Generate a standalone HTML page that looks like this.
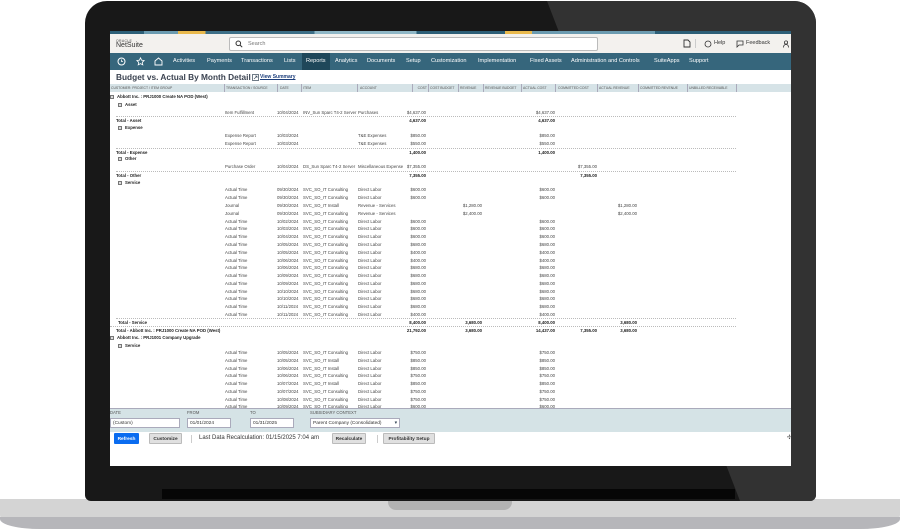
<!DOCTYPE html>
<html><head><meta charset="utf-8"><style>
*{margin:0;padding:0;box-sizing:border-box}
body{width:900px;height:529px;background:#fff;position:relative;overflow:hidden;font-family:"Liberation Sans",sans-serif}
.abs{position:absolute}
#body{left:85px;top:1px;width:731px;height:500px;background:#181818;border-radius:22px 22px 6px 6px;overflow:hidden}
#scr{left:110px;top:31px;width:681px;height:435px;background:#fff;overflow:hidden}
.r{position:absolute;left:0;width:681px;height:7px;font-size:4.3px;line-height:7px;color:#444;white-space:nowrap}
.r span{position:absolute;top:0}
.b{font-weight:bold;color:#222}
.t{left:115px}.d{left:167px}.i{left:193px}.a{left:248px}
.n1{left:280px;width:36px;text-align:right}
.n3{left:336px;width:36px;text-align:right}
.n5{left:409px;width:36px;text-align:right}
.n6{left:451px;width:36px;text-align:right}
.n7{left:491px;width:36px;text-align:right}
.tot{border-top:1px dotted #bbb}
.box{display:inline-block;width:4px;height:4px;border:0.6px solid #777;background:#ddd;vertical-align:middle;margin-right:3px}
.nav span{position:absolute;top:0;line-height:17px;font-size:5.6px;color:#fff;white-space:nowrap}
.hd span{position:absolute;top:0;font-size:3.4px;color:#555;line-height:8px;border-right:0.5px solid #aab;padding-right:1px;white-space:nowrap;overflow:hidden;height:8px}
.btn{position:absolute;top:402px;height:11px;font-size:4.8px;line-height:11px;text-align:center;background:#e0e0e0;border:0.5px solid #bbb;border-radius:1px;color:#333;font-weight:bold;white-space:nowrap}
.lab{position:absolute;top:379px;font-size:4.2px;color:#555}
.inp{position:absolute;top:387px;height:10px;background:#fff;border:0.5px solid #aab;font-size:4.8px;line-height:9px;padding-left:2px;color:#333;white-space:nowrap}
</style></head><body>
<div class="abs" style="left:0;top:499px;width:900px;height:30px;background:#d4d4d4;border-radius:0 0 40px 40px / 0 0 14px 14px"></div>
<div class="abs" style="left:0;top:517px;width:900px;height:12px;background:#b6b6ba;border-radius:0 0 40px 40px / 0 0 10px 10px"></div>
<div class="abs" style="left:388px;top:499px;width:124px;height:11px;background:#b2b2b2;border-radius:0 0 8px 8px"></div>
<div id="body" class="abs">
  <svg class="abs" style="left:0;top:0" width="731" height="500"><polygon points="462,0 731,0 731,500 655,500" fill="#323232"/></svg>
</div>
<div class="abs" style="left:162px;top:489px;width:573px;height:10px;background:#060606"></div>
<div id="scr" class="abs">
  <div class="abs" style="left:0;top:0;width:681px;height:3px;background:linear-gradient(90deg,#2d5f77 0 5%,#6b9bb0 5% 10%,#e9b94c 10% 14%,#3d6f87 14% 30%,#8fb7c6 30% 45%,#2d5f77 45% 58%,#e9b94c 58% 62%,#6b9bb0 62% 80%,#2d5f77 80%)"></div>
  <div class="abs" style="left:0;top:3px;width:681px;height:19px;background:#f3f1ee"></div>
  <div class="abs" style="left:6px;top:8px;font-size:3.5px;color:#444;letter-spacing:0.3px">ORACLE</div>
  <div class="abs" style="left:6px;top:11px;font-size:7px;color:#333">NetSuite</div>
  <div class="abs" style="left:119px;top:6px;width:369px;height:14px;background:#fff;border:0.7px solid #bbb;border-radius:2px;font-size:5.5px;line-height:13px;color:#777;padding-left:18px">Search</div>
  <svg class="abs" style="left:125px;top:9px" width="8" height="8"><circle cx="3.3" cy="3.3" r="2.3" stroke="#333" stroke-width="1" fill="none"/><line x1="5" y1="5" x2="7.2" y2="7.2" stroke="#333" stroke-width="1"/></svg>
  <svg class="abs" style="left:573px;top:8px" width="8" height="9"><path d="M1 1h4l2 2v5H1z" fill="none" stroke="#333" stroke-width="0.9"/></svg>
  <div class="abs" style="left:585px;top:8px;width:0.5px;height:9px;background:#ccc"></div>
  <svg class="abs" style="left:594px;top:9px" width="8" height="8"><circle cx="4" cy="4" r="3" fill="none" stroke="#333" stroke-width="0.8"/></svg>
  <div class="abs" style="left:604px;top:9px;font-size:5.5px;color:#333">Help</div>
  <svg class="abs" style="left:626px;top:9px" width="8" height="8"><path d="M1 1h6v4H3L1 7z" fill="none" stroke="#333" stroke-width="0.8"/></svg>
  <div class="abs" style="left:636px;top:9px;font-size:5.5px;color:#333">Feedback</div>
  <svg class="abs" style="left:673px;top:9px" width="8" height="8"><circle cx="3" cy="2.5" r="1.6" fill="none" stroke="#333" stroke-width="0.8"/><path d="M0.5 7.5c0-2 1-3 2.5-3s2.5 1 2.5 3" fill="none" stroke="#333" stroke-width="0.8"/></svg>
  <div class="abs nav" style="left:0;top:22px;width:681px;height:17px;background:#36667c">
    <div class="abs" style="left:192px;top:0;width:28px;height:17px;background:#1f475a"></div>
    <svg class="abs" style="left:7px;top:4px" width="9" height="9"><circle cx="4.5" cy="4.5" r="3.5" fill="none" stroke="#fff" stroke-width="1"/><path d="M4.5 2.5v2h1.5" stroke="#fff" stroke-width="0.8" fill="none"/></svg>
    <svg class="abs" style="left:26px;top:4px" width="9" height="9"><path d="M4.5 0.8l1.1 2.4 2.6.3-1.9 1.8.5 2.6-2.3-1.3-2.3 1.3.5-2.6L0.8 3.5l2.6-.3z" fill="none" stroke="#fff" stroke-width="0.8"/></svg>
    <svg class="abs" style="left:44px;top:4px" width="9" height="9"><path d="M1 8V4l3.5-3 3.5 3v4z" fill="none" stroke="#fff" stroke-width="0.9"/></svg>
    <span style="left:63px">Activities</span><span style="left:97px">Payments</span><span style="left:131px">Transactions</span><span style="left:174px">Lists</span><span style="left:196px">Reports</span><span style="left:225px">Analytics</span><span style="left:257px">Documents</span><span style="left:296px">Setup</span><span style="left:321px">Customization</span><span style="left:368px">Implementation</span><span style="left:420px">Fixed Assets</span><span style="left:461px">Administration and Controls</span><span style="left:544px">SuiteApps</span><span style="left:579px">Support</span>
  </div>
  <div class="abs" style="left:6px;top:41px;font-size:8.3px;font-weight:bold;color:#3a4250">Budget vs. Actual By Month Detail</div>
  <svg class="abs" style="left:142px;top:43px" width="7" height="7"><rect x="0.5" y="0.5" width="6" height="6" fill="none" stroke="#345" stroke-width="0.7"/><path d="M2 5l3-3M3 2h2v2" stroke="#345" stroke-width="0.6" fill="none"/></svg>
  <div class="abs" style="left:150px;top:43px;font-size:5px;font-weight:bold;color:#1b3d7a;text-decoration:underline">View Summary</div>
  <div class="abs hd" style="left:0;top:53px;width:681px;height:8px;background:#d6e3e7">
    <span style="left:1px;width:114px">CUSTOMER: PROJECT / ITEM GROUP</span><span style="left:116px;width:52px">TRANSACTION / SOURCE</span><span style="left:170px;width:22px">DATE</span><span style="left:193px;width:55px">ITEM</span><span style="left:250px;width:53px">ACCOUNT</span><span style="left:305px;width:14px;text-align:right">COST</span><span style="left:320px;width:29px">COST BUDGET</span><span style="left:350px;width:24px">REVENUE</span><span style="left:375px;width:37px">REVENUE BUDGET</span><span style="left:413px;width:33px">ACTUAL COST</span><span style="left:448px;width:40px">COMMITTED COST</span><span style="left:489px;width:40px">ACTUAL REVENUE</span><span style="left:530px;width:48px">COMMITTED REVENUE</span><span style="left:579px;width:48px">UNBILLED RECEIVABLE</span>
  </div>
  <div class="r" style="top:62px"><span class="b" style="left:0"><i class="box"></i>Abbott Inc. : PRJ1000 Create NA POD (West)</span></div>
  <div class="r" style="top:70px"><span class="b" style="left:8px"><i class="box"></i>Asset</span></div>
  <div class="r" style="top:78px"><span class="t">Item Fulfillment</span><span class="d">10/04/2024</span><span class="i">INV_Sun Sparc T4-2 Server</span><span class="a">Purchases</span><span class="n1">$4,637.00</span><span class="n5">$4,637.00</span></div>
  <div class="r tot" style="top:85px;left:6px;width:620px"><span class="b" style="left:0">Total - Asset</span><span class="n1 b" style="left:274px">4,637.00</span><span class="n5 b" style="left:403px">4,637.00</span></div>
  <div class="r" style="top:93px"><span class="b" style="left:8px"><i class="box"></i>Expense</span></div>
  <div class="r" style="top:101px"><span class="t">Expense Report</span><span class="d">10/03/2024</span><span class="a">T&amp;E Expenses</span><span class="n1">$850.00</span><span class="n5">$850.00</span></div>
  <div class="r" style="top:109px"><span class="t">Expense Report</span><span class="d">10/03/2024</span><span class="a">T&amp;E Expenses</span><span class="n1">$550.00</span><span class="n5">$550.00</span></div>
  <div class="r tot" style="top:117px;left:6px;width:620px"><span class="b" style="left:0">Total - Expense</span><span class="n1 b" style="left:274px">1,400.00</span><span class="n5 b" style="left:403px">1,400.00</span></div>
  <div class="r" style="top:124px"><span class="b" style="left:8px"><i class="box"></i>Other</span></div>
  <div class="r" style="top:132px"><span class="t">Purchase Order</span><span class="d">10/04/2024</span><span class="i">DS_Sun Sparc T4-2 Server</span><span class="a">Miscellaneous Expense</span><span class="n1">$7,355.00</span><span class="n6">$7,355.00</span></div>
  <div class="r tot" style="top:140px;left:6px;width:620px"><span class="b" style="left:0">Total - Other</span><span class="n1 b" style="left:274px">7,355.00</span><span class="n6 b" style="left:445px">7,355.00</span></div>
  <div class="r" style="top:148px"><span class="b" style="left:8px"><i class="box"></i>Service</span></div>
  <div class="r" style="top:155px"><span class="t">Actual Time</span><span class="d">09/30/2024</span><span class="i">SVC_SO_IT Consulting</span><span class="a">Direct Labor</span><span class="n1">$600.00</span><span class="n5">$600.00</span></div>
  <div class="r" style="top:163px"><span class="t">Actual Time</span><span class="d">09/30/2024</span><span class="i">SVC_SO_IT Consulting</span><span class="a">Direct Labor</span><span class="n1">$600.00</span><span class="n5">$600.00</span></div>
  <div class="r" style="top:171px"><span class="t">Journal</span><span class="d">09/30/2024</span><span class="i">SVC_SO_IT Install</span><span class="a">Revenue - Services</span><span class="n3">$1,280.00</span><span class="n7">$1,280.00</span></div>
  <div class="r" style="top:179px"><span class="t">Journal</span><span class="d">09/30/2024</span><span class="i">SVC_SO_IT Consulting</span><span class="a">Revenue - Services</span><span class="n3">$2,400.00</span><span class="n7">$2,400.00</span></div>
  <div class="r" style="top:187px"><span class="t">Actual Time</span><span class="d">10/02/2024</span><span class="i">SVC_SO_IT Consulting</span><span class="a">Direct Labor</span><span class="n1">$600.00</span><span class="n5">$600.00</span></div>
  <div class="r" style="top:194px"><span class="t">Actual Time</span><span class="d">10/03/2024</span><span class="i">SVC_SO_IT Consulting</span><span class="a">Direct Labor</span><span class="n1">$600.00</span><span class="n5">$600.00</span></div>
  <div class="r" style="top:202px"><span class="t">Actual Time</span><span class="d">10/04/2024</span><span class="i">SVC_SO_IT Consulting</span><span class="a">Direct Labor</span><span class="n1">$600.00</span><span class="n5">$600.00</span></div>
  <div class="r" style="top:210px"><span class="t">Actual Time</span><span class="d">10/05/2024</span><span class="i">SVC_SO_IT Consulting</span><span class="a">Direct Labor</span><span class="n1">$680.00</span><span class="n5">$680.00</span></div>
  <div class="r" style="top:218px"><span class="t">Actual Time</span><span class="d">10/05/2024</span><span class="i">SVC_SO_IT Consulting</span><span class="a">Direct Labor</span><span class="n1">$400.00</span><span class="n5">$400.00</span></div>
  <div class="r" style="top:226px"><span class="t">Actual Time</span><span class="d">10/06/2024</span><span class="i">SVC_SO_IT Consulting</span><span class="a">Direct Labor</span><span class="n1">$400.00</span><span class="n5">$400.00</span></div>
  <div class="r" style="top:233px"><span class="t">Actual Time</span><span class="d">10/06/2024</span><span class="i">SVC_SO_IT Consulting</span><span class="a">Direct Labor</span><span class="n1">$680.00</span><span class="n5">$680.00</span></div>
  <div class="r" style="top:241px"><span class="t">Actual Time</span><span class="d">10/09/2024</span><span class="i">SVC_SO_IT Consulting</span><span class="a">Direct Labor</span><span class="n1">$680.00</span><span class="n5">$680.00</span></div>
  <div class="r" style="top:249px"><span class="t">Actual Time</span><span class="d">10/09/2024</span><span class="i">SVC_SO_IT Consulting</span><span class="a">Direct Labor</span><span class="n1">$680.00</span><span class="n5">$680.00</span></div>
  <div class="r" style="top:257px"><span class="t">Actual Time</span><span class="d">10/10/2024</span><span class="i">SVC_SO_IT Consulting</span><span class="a">Direct Labor</span><span class="n1">$680.00</span><span class="n5">$680.00</span></div>
  <div class="r" style="top:264px"><span class="t">Actual Time</span><span class="d">10/10/2024</span><span class="i">SVC_SO_IT Consulting</span><span class="a">Direct Labor</span><span class="n1">$680.00</span><span class="n5">$680.00</span></div>
  <div class="r" style="top:272px"><span class="t">Actual Time</span><span class="d">10/11/2024</span><span class="i">SVC_SO_IT Consulting</span><span class="a">Direct Labor</span><span class="n1">$680.00</span><span class="n5">$680.00</span></div>
  <div class="r" style="top:280px"><span class="t">Actual Time</span><span class="d">10/11/2024</span><span class="i">SVC_SO_IT Consulting</span><span class="a">Direct Labor</span><span class="n1">$400.00</span><span class="n5">$400.00</span></div>
  <div class="r tot" style="top:287px;left:6px;width:620px"><span class="b" style="left:2px">Total - Service</span><span class="n1 b" style="left:274px">8,400.00</span><span class="n3 b" style="left:330px">3,680.00</span><span class="n5 b" style="left:403px">8,400.00</span><span class="n7 b" style="left:485px">3,680.00</span></div>
  <div class="r tot" style="top:295px;width:626px"><span class="b" style="left:6px">Total - Abbott Inc. : PRJ1000 Create NA POD (West)</span><span class="n1 b">21,792.00</span><span class="n3 b">3,680.00</span><span class="n5 b">14,437.00</span><span class="n6 b">7,355.00</span><span class="n7 b">3,680.00</span></div>
  <div class="r" style="top:303px"><span class="b" style="left:0"><i class="box"></i>Abbott Inc. : PRJ1001 Company Upgrade</span></div>
  <div class="r" style="top:311px"><span class="b" style="left:8px"><i class="box"></i>Service</span></div>
  <div class="r" style="top:318px"><span class="t">Actual Time</span><span class="d">10/05/2024</span><span class="i">SVC_SO_IT Consulting</span><span class="a">Direct Labor</span><span class="n1">$750.00</span><span class="n5">$750.00</span></div>
  <div class="r" style="top:326px"><span class="t">Actual Time</span><span class="d">10/05/2024</span><span class="i">SVC_SO_IT Install</span><span class="a">Direct Labor</span><span class="n1">$850.00</span><span class="n5">$850.00</span></div>
  <div class="r" style="top:334px"><span class="t">Actual Time</span><span class="d">10/06/2024</span><span class="i">SVC_SO_IT Install</span><span class="a">Direct Labor</span><span class="n1">$850.00</span><span class="n5">$850.00</span></div>
  <div class="r" style="top:341px"><span class="t">Actual Time</span><span class="d">10/06/2024</span><span class="i">SVC_SO_IT Consulting</span><span class="a">Direct Labor</span><span class="n1">$750.00</span><span class="n5">$750.00</span></div>
  <div class="r" style="top:349px"><span class="t">Actual Time</span><span class="d">10/07/2024</span><span class="i">SVC_SO_IT Install</span><span class="a">Direct Labor</span><span class="n1">$850.00</span><span class="n5">$850.00</span></div>
  <div class="r" style="top:357px"><span class="t">Actual Time</span><span class="d">10/07/2024</span><span class="i">SVC_SO_IT Consulting</span><span class="a">Direct Labor</span><span class="n1">$750.00</span><span class="n5">$750.00</span></div>
  <div class="r" style="top:365px"><span class="t">Actual Time</span><span class="d">10/08/2024</span><span class="i">SVC_SO_IT Consulting</span><span class="a">Direct Labor</span><span class="n1">$750.00</span><span class="n5">$750.00</span></div>
  <div class="r" style="top:372px"><span class="t">Actual Time</span><span class="d">10/09/2024</span><span class="i">SVC_SO_IT Consulting</span><span class="a">Direct Labor</span><span class="n1">$600.00</span><span class="n5">$600.00</span></div>
  <div class="abs" style="left:0;top:377px;width:681px;height:24px;background:#d5e3e6;border-top:0.7px solid #aab"></div>
  <div class="lab" style="left:0">DATE</div><div class="lab" style="left:77px">FROM</div><div class="lab" style="left:140px">TO</div><div class="lab" style="left:200px">SUBSIDIARY CONTEXT</div>
  <div class="inp" style="left:0;width:70px">(Custom)</div>
  <div class="inp" style="left:77px;width:44px">01/01/2024</div>
  <div class="inp" style="left:140px;width:44px">01/31/2025</div>
  <div class="inp" style="left:200px;width:90px">Parent Company (Consolidated) <span style="position:absolute;right:2px;color:#345">▾</span></div>
  <div class="btn" style="left:4px;width:25px;background:#0a6cf0;color:#fff;border-color:#0a6cf0">Refresh</div>
  <div class="btn" style="left:39px;width:33px">Customize</div>
  <div class="abs" style="left:81px;top:404px;width:0.5px;height:8px;background:#ccc"></div>
  <div class="abs" style="left:89px;top:404px;font-size:6px;color:#333;white-space:nowrap">Last Data Recalculation: 01/15/2025 7:04 am</div>
  <div class="btn" style="left:222px;width:34px">Recalculate</div>
  <div class="abs" style="left:267px;top:404px;width:0.5px;height:8px;background:#ccc"></div>
  <div class="btn" style="left:273px;width:52px">Profitability Setup</div>
  <div class="abs" style="left:677px;top:403px;font-size:6px;color:#555">✣</div>
</div>
</body></html>
